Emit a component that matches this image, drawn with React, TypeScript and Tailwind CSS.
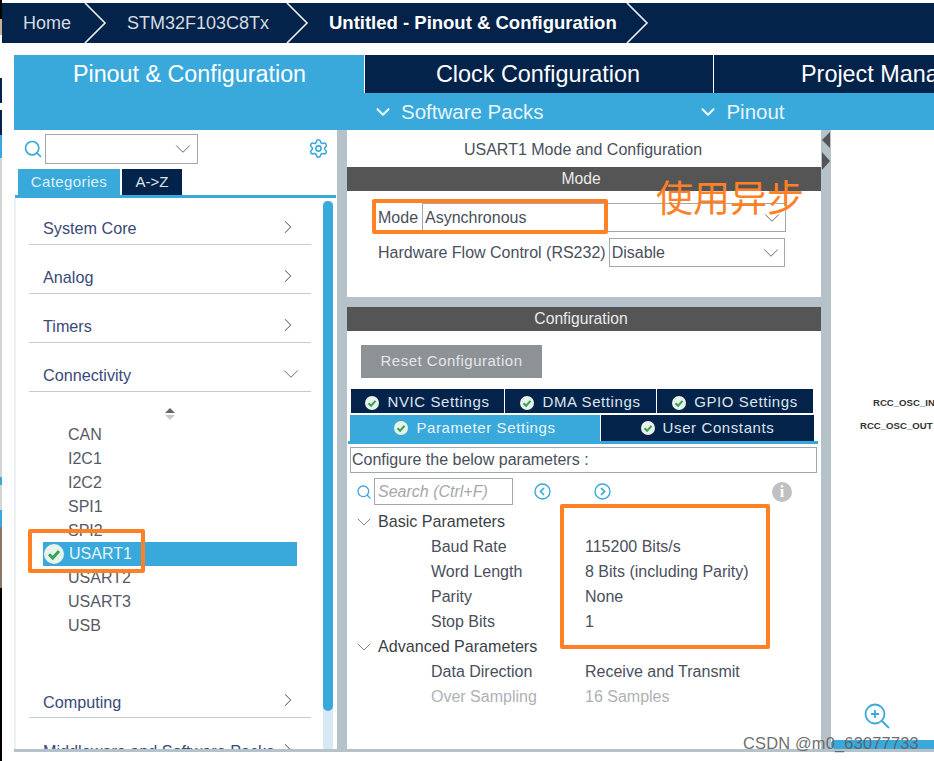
import React from "react";
import { ChevronRight, ChevronDown, Search, Settings } from "lucide-react";

const navy = "bg-[#03234b]";

function Crumb({ children, bold, w, pl }: { children: React.ReactNode; bold?: boolean; w: string; pl: string }) {
  return (
    <div className={`h-full flex items-center ${bold ? "" : "pt-[1px]"} ${w} ${pl} whitespace-nowrap ${bold ? "font-bold text-white text-[18.5px]" : "text-[#d5dbe2] text-[18px]"}`}>
      {children}
    </div>
  );
}

function Cat({ label, open, mt, pt }: { label: string; open?: boolean; mt?: string; pt?: string }) {
  return (
    <div className={`ml-[13px] mr-[12px] h-[35px] border-b border-[#c3ccd2] flex items-center justify-between pl-[14px] ${open ? "pr-[7px]" : "pr-[12px]"} ${mt ?? ""}`}>
      <span className={`text-[16.2px] text-[#3a4a78] ${pt ?? "pt-[3px]"} whitespace-nowrap`}>{label}</span>
      {open ? <ChevronDown size={26} strokeWidth={0.9} className="text-[#666]" /> : <ChevronRight size={22} strokeWidth={1.1} className="text-[#666]" />}
    </div>
  );
}

function Check({ size = 14 }: { size?: number }) {
  return (
    <svg width={size} height={size} viewBox="0 0 16 16" className="shrink-0">
      <circle cx="8" cy="8" r="8" fill="#e8f3ea" />
      <path d="M4 8.2l3 3 5-5.6" stroke="#39a25b" strokeWidth="2.4" fill="none" />
    </svg>
  );
}

function Tab({ label, active, w, h, pt }: { label: string; active?: boolean; w: string; h: string; pt: string }) {
  return (
    <div className={`${w} ${h} ${pt} flex items-center justify-center gap-[8px] text-[15px] tracking-[0.6px] ${active ? "bg-[#39a9dc] text-[#eaf6fc]" : "bg-[#03234b] text-[#dfe5ec]"}`}>
      <Check />
      <span>{label}</span>
    </div>
  );
}

function Param({ k, v, dim }: { k: string; v: string; dim?: boolean }) {
  return (
    <div className={`h-[25px] flex items-center text-[16px] ${dim ? "text-[#aeb1b5]" : "text-[#4a4f5c]"}`}>
      <span className="ml-[84px] w-[154px] whitespace-nowrap">{k}</span>
      <span className="whitespace-nowrap">{v}</span>
    </div>
  );
}

function EdgeStrip() {
  return (
    <div className="absolute left-0 top-0 w-[2px] h-[761px] flex flex-col bg-[#d9d9d9]">
      <div className="h-[19px] bg-black"></div>
      <div className="h-[16px] bg-[#c9b299]"></div>
      <div className="h-[43px] bg-white"></div>
      <div className="h-[25px] bg-[#03234b]"></div>
      <div className="h-[7px] bg-white"></div>
      <div className="h-[25px] bg-[#03234b]"></div>
      <div className="h-[23px] bg-[#39a9dc]"></div>
      <div className="h-[319px] bg-[#d5d5d5]"></div>
      <div className="h-[8px] bg-[#39a9dc]"></div>
      <div className="h-[25px] bg-[#d5d5d5]"></div>
      <div className="h-[17px] bg-[#39a9dc]"></div>
      <div className="h-[61px] bg-[#8a7767]"></div>
      <div className="flex-1 bg-black"></div>
    </div>
  );
}

export default function App() {
  return (
    <div className="relative w-[934px] h-[761px] bg-white overflow-hidden font-['Liberation_Sans',sans-serif]">
      <EdgeStrip />

      {/* breadcrumb */}
      <div className={`ml-[2px] mt-[3px] h-[40px] w-[932px] ${navy} relative flex`}>
        <Crumb w="w-[83px]" pl="pl-[21px]">Home</Crumb>
        <Crumb w="w-[200px]" pl="pl-[42px]">STM32F103C8Tx</Crumb>
        <Crumb bold w="w-[380px]" pl="pl-[44px]">Untitled - Pinout &amp; Configuration</Crumb>
        <svg className="absolute left-0 top-0" width="932" height="40" fill="none" stroke="#eef1f4" strokeWidth="1.6">
          <path d="M83 0l20 20-20 20" />
          <path d="M285 0l20 20-20 20" />
          <path d="M625 0l20 20-20 20" />
        </svg>
      </div>

      {/* main tabs */}
      <div className="ml-[14px] mt-[12px] flex h-[38px] bg-white">
        <div className="w-[350px] bg-[#39a9dc] text-white text-[23.3px] flex items-center justify-center pt-[1px] pl-[1px]">Pinout &amp; Configuration</div>
        <div className="w-[348px] ml-px bg-[#03234b] text-white text-[23.4px] flex items-center justify-center pt-[1px] pr-[2px]">Clock Configuration</div>
        <div className="flex-1 ml-px bg-[#03234b] text-white text-[23.4px] flex items-center pt-[1px] pl-[87px] whitespace-nowrap overflow-hidden">Project Manager</div>
      </div>
      <div className="ml-[14px] h-[37px] bg-[#39a9dc] flex items-center text-[#e8f5fb] text-[20.5px] pt-[1px]">
        <ChevronDown size={22} strokeWidth={2.4} className="ml-[358px]" />
        <span className="ml-[7px]">Software Packs</span>
        <ChevronDown size={22} strokeWidth={2.4} className="ml-[154px]" />
        <span className="ml-[7px]">Pinout</span>
      </div>

      {/* body */}
      <div className="ml-[14px] h-[622px] bg-[#b6c2ca] flex pb-[3px]">
        {/* left */}
        <div className="w-[323px] bg-white flex flex-col">
          <div className="h-[38px] flex items-center pl-[9px] pb-[1px]">
            <Search size={20} strokeWidth={2} className="text-[#39a9dc]" />
            <div className="ml-[2px] w-[153px] h-[30px] border border-[#a4a8ab] flex items-center justify-end pr-[1px]">
              <ChevronDown size={26} strokeWidth={0.9} className="text-[#666]" />
            </div>
            <Settings size={21} strokeWidth={1.8} className="ml-[110px] text-[#39a9dc]" />
          </div>
          <div className="flex h-[26px] ml-[4px] mt-[1px]">
            <div className="w-[102px] bg-[#39a9dc] text-[#dff1fa] text-[15px] tracking-[0.4px] flex items-center justify-center">Categories</div>
            <div className="w-[60px] ml-[2px] bg-[#03234b] text-[#dfe5ec] text-[15px] flex items-center justify-center">A-&gt;Z</div>
          </div>
          <div className="ml-[1px] mr-[1px] h-[3px] bg-[#39a9dc]"></div>
          <div className="flex-1 flex min-h-0 overflow-hidden border-l-[2px] border-[#eef1f3]">
            <div className="w-[307px] overflow-hidden pt-[12px] shrink-0">
              <Cat label="System Core" />
              <Cat label="Analog" mt="mt-[14px]" />
              <Cat label="Timers" mt="mt-[14px]" />
              <Cat label="Connectivity" open mt="mt-[14px]" />
              <div className="flex justify-center mt-[15px] h-[13px]">
                <svg width="12" height="14" viewBox="0 0 12 14"><path d="M6 1l5 5H1z" fill="#666" /><path d="M6 13l5-5H1z" fill="#c5c9cc" /></svg>
              </div>
              <div className="text-[16px] text-[#555a66] leading-[24px] pl-[52px] mt-[3px]">
                <div>CAN</div>
                <div>I2C1</div>
                <div>I2C2</div>
                <div>SPI1</div>
                <div>SPI2</div>
                <div className="h-[24px] -mt-[1px] -ml-[25px] mr-[26px] bg-[#39a9dc] text-[#e5f4fb] flex items-center pl-[1px] gap-[5px]">
                  <Check size={20} />
                  <span>USART1</span>
                </div>
                <div>USART2</div>
                <div>USART3</div>
                <div>USB</div>
              </div>
              <Cat label="Computing" mt="mt-[45px]" pt="pt-[5px]" />
              <Cat label="Middleware and Software Packs" mt="mt-[15px]" />
            </div>
            <div className="w-[10px] bg-[#d9e8f5] mt-[3px]">
              <div className="h-[510px] bg-[#39a9dc] rounded-[5px]"></div>
            </div>
            <div className="flex-1 bg-white"></div>
          </div>
        </div>

        {/* center */}
        <div className="ml-[10px] w-[474px] flex flex-col">
          <div className="bg-white h-[167px] flex flex-col">
            <div className="h-[37px] flex items-center justify-center text-[16px] text-[#4a4f5c] pt-[2px] pr-[2px]">USART1 Mode and Configuration</div>
            <div className="h-[24px] bg-[#555555] text-[#eaeaea] text-[15.7px] flex items-center justify-center pr-[6px]">Mode</div>
            <div className="h-[29px] mt-[12px] flex items-center text-[16px] text-[#4a4f5c]">
              <span className="ml-[31px]">Mode</span>
              <div className="ml-[4px] w-[364px] h-[29px] border border-[#a4a8ab] flex items-center justify-between pl-[2px]">
                <span>Asynchronous</span>
                <ChevronDown size={26} strokeWidth={0.9} className="text-[#666]" />
              </div>
            </div>
            <div className="h-[29px] mt-[6px] flex items-center text-[16px] text-[#4a4f5c]">
              <span className="ml-[31px] whitespace-nowrap">Hardware Flow Control (RS232)</span>
              <div className="ml-[3px] w-[176px] h-[29px] border border-[#a4a8ab] flex items-center justify-between pl-[2px]">
                <span>Disable</span>
                <ChevronDown size={26} strokeWidth={0.9} className="text-[#666]" />
              </div>
            </div>
          </div>
          <div className="h-[10px]"></div>
          <div className="bg-white flex-1 flex flex-col min-h-0">
            <div className="h-[24px] bg-[#555555] text-[#eaeaea] text-[15.7px] flex items-center justify-center pr-[6px]">Configuration</div>
            <div className="ml-[14px] mt-[14px] w-[181px] h-[33px] bg-[#8d9296] text-[#e4e6e8] text-[15px] tracking-[0.5px] flex items-center justify-center">Reset Configuration</div>
            <div className="ml-[4px] mt-[11px] flex gap-px">
              <Tab w="w-[153px]" h="h-[24px]" pt="pt-[3px]" label="NVIC Settings" />
              <Tab w="w-[151px]" h="h-[24px]" pt="pt-[3px]" label="DMA Settings" />
              <Tab w="w-[156px]" h="h-[24px]" pt="pt-[3px]" label="GPIO Settings" />
            </div>
            <div className="ml-[3px] mt-[2px] flex gap-px">
              <Tab active w="w-[250px]" h="h-[26px]" pt="pt-0" label="Parameter Settings" />
              <Tab w="w-[213px]" h="h-[26px]" pt="pt-0" label="User Constants" />
            </div>
            <div className="ml-[1px] mr-[3px] h-[3px] bg-[#39a9dc]"></div>
            <div className="ml-[3px] mr-[4px] mt-[3px] h-[26px] border border-[#a4a8ab] flex items-center pl-px text-[16px] text-[#4a4f5c]">Configure the below parameters :</div>
            <div className="mt-[5px] h-[27px] flex items-center">
              <Search size={16} strokeWidth={2} className="ml-[9px] text-[#39a9dc]" />
              <div className="ml-[2px] w-[139px] h-[27px] border border-[#a4a8ab] flex items-center pl-[3px] text-[16px] italic text-[#a5a8ab] whitespace-nowrap">Search (Ctrl+F)</div>
              <svg className="ml-[21px]" width="17" height="17" viewBox="0 0 17 17" fill="none" stroke="#39a9dc" strokeWidth="1.4"><circle cx="8.5" cy="8.5" r="7.5" /><path d="M10 5l-3.5 3.5L10 12" strokeWidth="1.7" /></svg>
              <svg className="ml-[43px]" width="17" height="17" viewBox="0 0 17 17" fill="none" stroke="#39a9dc" strokeWidth="1.4"><circle cx="8.5" cy="8.5" r="7.5" /><path d="M7 5l3.5 3.5L7 12" strokeWidth="1.7" /></svg>
              <div className="ml-[161px] w-[20px] h-[20px] rounded-full bg-[#bfc0c1] text-white font-bold text-[16px] flex items-center justify-center font-['Liberation_Serif',serif]">i</div>
            </div>
            <div className="mt-[4px] h-[25px] flex items-center text-[16.1px] text-[#3b3f48]">
              <ChevronDown size={24} strokeWidth={0.9} className="ml-[5px] text-[#777]" />
              <span className="ml-[2px]">Basic Parameters</span>
            </div>
            <Param k="Baud Rate" v="115200 Bits/s" />
            <Param k="Word Length" v="8 Bits (including Parity)" />
            <Param k="Parity" v="None" />
            <Param k="Stop Bits" v="1" />
            <div className="h-[25px] flex items-center text-[16.1px] text-[#3b3f48]">
              <ChevronDown size={24} strokeWidth={0.9} className="ml-[5px] text-[#777]" />
              <span className="ml-[2px]">Advanced Parameters</span>
            </div>
            <Param k="Data Direction" v="Receive and Transmit" />
            <Param k="Over Sampling" v="16 Samples" dim />
          </div>
        </div>

        {/* right */}
        <div className="ml-[10px] flex-1 bg-white relative">
          <span className="absolute left-[42px] top-[266px] text-[9.6px] font-bold text-[#333] whitespace-nowrap">RCC_OSC_IN</span>
          <span className="absolute left-[29px] top-[289px] text-[9.6px] font-bold text-[#333] whitespace-nowrap">RCC_OSC_OUT</span>
          <svg className="absolute left-[32px] top-[572px]" width="28" height="28" viewBox="0 0 28 28" fill="none" stroke="#39a9dc" strokeWidth="1.8">
            <circle cx="12" cy="12" r="9.5" /><path d="M19 19l7 7M8 12h8M12 8v8" />
          </svg>
          <div className="absolute left-0 right-0 bottom-0 h-[9px] bg-[#39a9dc] rounded-l-[4px]"></div>
        </div>
      </div>

      {/* collapse arrows */}
      <svg className="absolute left-[821px] top-[130px]" width="10" height="42" viewBox="0 0 10 42"><path d="M9 2v16L1 10z" fill="#555" /><path d="M1 22v18l8-9z" fill="#555" /></svg>

      {/* annotations */}
      <div className="absolute left-[372px] top-[199px] w-[236px] h-[35px] border-[4px] border-[#ff8126] rounded-[2px]"></div>
      <div className="absolute left-[28px] top-[529px] w-[117px] h-[44px] border-[4px] border-[#ff8126] rounded-[2px]"></div>
      <div className="absolute left-[560px] top-[504px] w-[210px] h-[145px] border-[4px] border-[#ff8126] rounded-[2px]"></div>
      <div className="absolute left-[656px] top-[174px] text-[37px] leading-[44px] text-[#ff8126] font-['Noto_Sans_CJK_SC',sans-serif] whitespace-nowrap">使用异步</div>
      <div className="absolute left-[743px] top-[731px] text-[16.4px] tracking-[0.2px] text-[#5f6163] opacity-90 whitespace-nowrap">CSDN @m0_63077733</div>
    </div>
  );
}
